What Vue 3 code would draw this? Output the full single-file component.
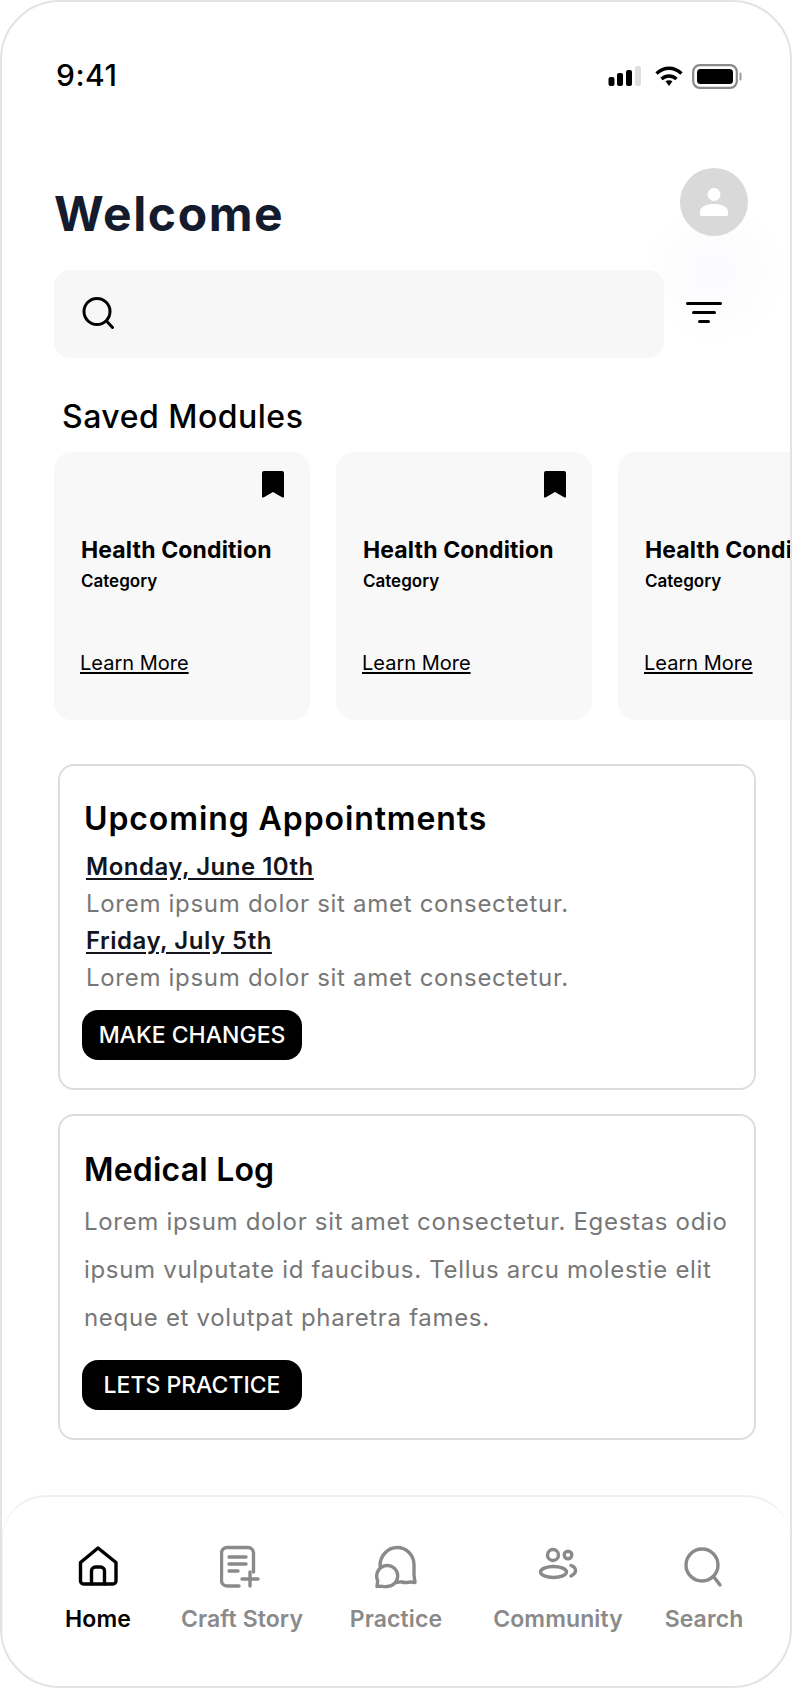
<script setup>
const modules = [1, 2, 3].map((id) => ({ id, title: 'Health Condition', category: 'Category' }));

const tabs = [
  { label: 'Home', icon: 'home', active: true },
  { label: 'Craft Story', icon: 'story' },
  { label: 'Practice', icon: 'chat' },
  { label: 'Community', icon: 'people' },
  { label: 'Search', icon: 'search' },
];
</script>

<template>
  <div class="phone">
    <div class="glow"></div>

    <div class="status">
      <span class="status__time">9:41</span>
      <div class="status__icons">
        <svg width="34" height="20" viewBox="0 0 34 20">
          <rect x="0.5" y="11" width="6" height="9" rx="2" />
          <rect x="9" y="7" width="6" height="13" rx="2" />
          <rect x="18" y="4" width="6" height="16" rx="2" />
          <rect x="27" y="0" width="6" height="20" rx="2" fill="#dedede" />
        </svg>
        <svg width="28" height="20" viewBox="0 0 28 20" fill="none" stroke="#000" stroke-width="3.4">
          <path d="M1.500 7.500C9 .5 19 .5 26.500 7.500" />
          <path d="M6.500 13C11 9 17 9 21.500 13" />
          <path d="M10.500 15.200C12.500 13.800 15.500 13.800 17.500 15.200L14 20Z" fill="#000" stroke="none" />
        </svg>
        <svg width="50" height="25" viewBox="0 0 50 25">
          <rect x="1.200" y="1.200" width="43.600" height="22.600" rx="6.500" fill="none" stroke="#8a8a8e" stroke-width="2.200" />
          <rect x="5" y="5" width="36" height="15" rx="3.500" />
          <rect x="47.500" y="8.500" width="2" height="8" rx="1" fill="#9a9a9e" />
        </svg>
      </div>
    </div>

    <div class="header">
      <h1 class="header__title">Welcome</h1>
      <div class="avatar">
        <svg width="30" height="30" viewBox="0 0 30 30" fill="#fff">
          <circle cx="15" cy="7.500" r="6.500" />
          <path d="M1 24.500C1 19.500 8 17 15 17S29 19.500 29 24.500V27.500A1.500 1.500 0 0 1 27.500 29H2.500A1.500 1.500 0 0 1 1 27.500Z" />
        </svg>
      </div>
    </div>

    <div class="search-row">
      <div class="search">
        <svg class="search__icon" width="32" height="32" viewBox="0 0 32 32" fill="none" stroke="#000" stroke-width="3" stroke-linecap="round">
          <circle cx="15" cy="14.500" r="13" />
          <path d="M24.500 24L30.500 30.500" />
        </svg>
      </div>
      <div class="filter">
        <span class="filter__line filter__line--lg"></span>
        <span class="filter__line filter__line--md"></span>
        <span class="filter__line filter__line--sm"></span>
      </div>
    </div>

    <h2 class="section-title">Saved Modules</h2>
    <div class="rail">
      <div v-for="item in modules" :key="item.id" class="module">
        <svg class="module__mark" width="22" height="27" viewBox="0 0 22 27">
          <path d="M2 0H20A2 2 0 0 1 22 2V25.500A1 1 0 0 1 20.500 26.400L11 21L1.500 26.400A1 1 0 0 1 0 25.500V2A2 2 0 0 1 2 0Z" />
        </svg>
        <div class="module__title">{{ item.title }}</div>
        <div class="module__category">{{ item.category }}</div>
        <a class="module__link">Learn More</a>
      </div>
    </div>

    <section class="panel panel--first">
      <h3 class="panel__title panel__title--wide">Upcoming Appointments</h3>
      <div class="date">Monday, June 10th</div>
      <p class="lorem">Lorem ipsum dolor sit amet consectetur.</p>
      <div class="date">Friday, July 5th</div>
      <p class="lorem">Lorem ipsum dolor sit amet consectetur.</p>
      <button class="btn" type="button">MAKE CHANGES</button>
    </section>

    <section class="panel">
      <h3 class="panel__title">Medical Log</h3>
      <p class="panel__body">Lorem ipsum dolor sit amet consectetur. Egestas odio ipsum vulputate id faucibus. Tellus arcu molestie elit neque et volutpat pharetra fames.</p>
      <button class="btn" type="button">LETS PRACTICE</button>
    </section>

    <nav class="tabs">
      <div v-for="tab in tabs" :key="tab.label" class="tab" :class="{ 'tab--active': tab.active }">
        <svg class="tab__icon" width="44" height="44" viewBox="0 0 44 44" fill="none" stroke="currentColor" stroke-width="3.400" stroke-linecap="round" stroke-linejoin="round">
          <template v-if="tab.icon === 'home'">
            <path d="M4.500 17.500L22 3L40 17.500V36A3 3 0 0 1 37 39H7.500A3 3 0 0 1 4.500 36Z" />
            <path d="M15.500 39V26A4 4 0 0 1 19.500 22H24.500A4 4 0 0 1 28.500 26V39" />
          </template>
          <template v-else-if="tab.icon === 'story'">
            <path d="M19 41H7A5.500 5.500 0 0 1 1.500 35.500V8A5.500 5.500 0 0 1 7 2.500H28A5.500 5.500 0 0 1 33.500 8V27" />
            <path d="M9 12H26M9 19H26M9 26H18" />
            <path d="M22 34H38M30 27V41" />
          </template>
          <template v-else-if="tab.icon === 'chat'">
            <path d="M6 21C6 11 13.500 2.500 23 2.500C32.500 2.500 40 10 40 20V30L41 37.500C36 36 33 38.500 28 37C26 36.500 24.500 37 23 37.500" />
            <path d="M3 41.500L3.700 35.500A10.500 10.500 0 1 1 13 41.500C9.500 42 6 40.500 3 41.500Z" />
          </template>
          <template v-else-if="tab.icon === 'people'">
            <circle cx="17" cy="10" r="5.500" />
            <circle cx="32" cy="10" r="3.800" />
            <ellipse cx="17.500" cy="27" rx="13" ry="5.500" />
            <path d="M35 20.500C38 21.500 39.500 23.500 39.500 25.500C39.500 27.500 38 29.500 35 31" />
          </template>
          <template v-else>
            <circle cx="20" cy="20" r="16" />
            <path d="M31.500 31.500L38 40" />
          </template>
        </svg>
        <span class="tab__label">{{ tab.label }}</span>
      </div>
    </nav>
  </div>
</template>

<style>
body {
  background: #fff;
}
</style>

<style scoped>
.phone {
  position: relative;
  display: flex;
  flex-direction: column;
  width: 792px;
  height: 1688px;
  box-sizing: border-box;
  overflow: hidden;
  border: 2px solid #e3e3e3;
  border-radius: 60px;
  background: #fff;
  font-family: Inter, "Liberation Sans", sans-serif;
  color: #000;
}

.glow {
  position: absolute;
  left: 640px;
  top: 198px;
  width: 144px;
  height: 144px;
  border-radius: 50%;
  background: radial-gradient(circle, #fbfbfe 0%, #fdfdfe 45%, #ffffff 70%);
}

.status {
  position: relative;
  display: flex;
  justify-content: space-between;
  align-items: center;
  height: 36px;
  margin-top: 55px;
  padding: 0 48px 0 54px;
}
.status__time {
  font-size: 30px;
  font-weight: 500;
  letter-spacing: 0.500px;
  line-height: 36px;
}
.status__icons {
  display: flex;
  align-items: center;
  gap: 13px;
  margin-top: 2px;
}
.status__icons svg:last-child {
  margin-left: -4px;
}

.header {
  position: relative;
  display: flex;
  justify-content: space-between;
  margin-top: 75px;
  padding: 0 42px 0 52px;
}
.header__title {
  margin: 18px 0 0;
  font-size: 48px;
  font-weight: 700;
  letter-spacing: 1.600px;
  line-height: 56px;
  color: #141b2d;
}
.avatar {
  display: flex;
  align-items: center;
  justify-content: center;
  width: 68px;
  height: 68px;
  border-radius: 50%;
  background: #d9d9d9;
}

.search-row {
  position: relative;
  display: flex;
  align-items: center;
  gap: 22px;
  margin-top: 28px;
  padding-left: 52px;
}
.search {
  display: flex;
  align-items: center;
  width: 610px;
  height: 88px;
  box-sizing: border-box;
  padding-left: 28px;
  border-radius: 16px;
  background: #f7f7f7;
}
.search__icon {
  margin-top: -3px;
}
.filter {
  display: flex;
  flex-direction: column;
  align-items: center;
  gap: 6px;
  width: 36px;
  margin-top: -4px;
}
.filter__line {
  display: block;
  height: 3px;
  border-radius: 2px;
  background: #000;
}
.filter__line--lg {
  width: 36px;
}
.filter__line--md {
  width: 24px;
}
.filter__line--sm {
  width: 12px;
}

.section-title {
  margin: 39px 0 0 60px;
  font-size: 32px;
  font-weight: 500;
  letter-spacing: 0.500px;
  line-height: 40px;
}

.rail {
  display: flex;
  gap: 26px;
  margin-top: 15px;
  padding-left: 52px;
}
.module {
  position: relative;
  flex: 0 0 256px;
  height: 268px;
  box-sizing: border-box;
  padding: 83px 0 0 27px;
  border-radius: 18px;
  background: #f8f8f8;
}
.module__mark {
  position: absolute;
  top: 19px;
  right: 26px;
}
.module__title {
  font-size: 23px;
  font-weight: 700;
  letter-spacing: 0.130px;
  line-height: 30px;
  white-space: nowrap;
}
.module__category {
  margin-top: 4px;
  font-size: 17px;
  font-weight: 600;
  line-height: 24px;
}
.module__link {
  display: inline-block;
  margin: 56px 0 0 -1px;
  font-size: 20px;
  line-height: 28px;
  text-decoration: underline;
  text-underline-offset: 2px;
}

.panel {
  box-sizing: border-box;
  width: 698px;
  height: 326px;
  margin: 24px 0 0 56px;
  padding: 34px 0 0 24px;
  border: 2px solid #dddddd;
  border-radius: 16px;
}
.panel--first {
  margin-top: 44px;
  padding-top: 33px;
}
.panel__title {
  margin: 0;
  font-size: 32px;
  font-weight: 600;
  letter-spacing: 0.200px;
  line-height: 40px;
}
.panel__title--wide {
  margin-bottom: 9px;
  letter-spacing: 0.900px;
}
.date {
  margin: 0 0 0 2px;
  font-size: 24px;
  font-weight: 600;
  letter-spacing: 0.500px;
  line-height: 37px;
  color: #14141c;
  text-decoration: underline;
  text-underline-offset: 3px;
}
.lorem {
  margin: 0 0 0 2px;
  font-size: 24px;
  letter-spacing: 0.700px;
  line-height: 37px;
  color: #777777;
}
.panel__body {
  width: 660px;
  margin: 8px 0 18px;
  font-size: 24px;
  letter-spacing: 0.680px;
  line-height: 48px;
  color: #777777;
}
.btn {
  display: block;
  width: 220px;
  height: 50px;
  margin: 14px 0 0 -2px;
  padding: 0;
  border: 0;
  border-radius: 16px;
  background: #000;
  color: #fff;
  font-family: inherit;
  font-size: 23px;
  font-weight: 500;
}

.tabs {
  display: grid;
  grid-template-columns: 132px 156px 152px 172px 120px;
  margin-top: auto;
  height: 191px;
  box-sizing: border-box;
  padding: 48px 0 0 30px;
  border-top: 2px solid #f0f0f0;
  border-radius: 44px 44px 0 0;
  box-shadow: inset 2px 0 0 -1px #f4f4f4;
}
.tab {
  display: flex;
  flex-direction: column;
  align-items: center;
  color: #8a8a8a;
}
.tab--active {
  color: #000;
}
.tab__label {
  margin-top: 15px;
  font-size: 23px;
  font-weight: 600;
  letter-spacing: 0.100px;
  line-height: 30px;
  white-space: nowrap;
}
</style>
